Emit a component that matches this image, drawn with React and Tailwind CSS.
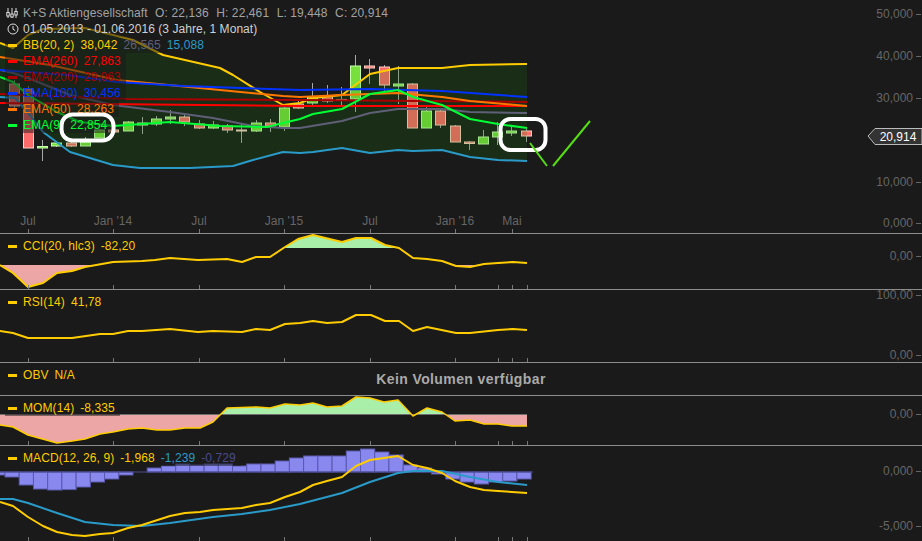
const YEL = "#ffcc00", BLU = "#2a9ac8", GRY = "#5f5f78";

const pts = (a) => a.map((p) => p.join(",")).join(" ");

// k, bodyTop, bodyBottom, wickTop, wickBottom, up
const candles = [
  [-1, 84, 106, 80, 110, 0], [0, 89, 148, 86, 148, 0], [1, 146.5, 148, 140, 161, 1], [2, 143, 146, 141, 147, 1],
  [3, 143, 146, 141, 147, 0], [4, 142, 146, 137, 146, 1], [5, 130, 138, 129, 138, 1], [6, 130, 132, 128, 136, 0],
  [7, 122, 131, 121, 131, 1], [8, 123, 125, 117, 134, 1], [9, 119, 124, 116, 126, 1], [10, 117, 119, 110, 124, 1],
  [11, 117, 122, 115, 126, 0], [12, 124, 128, 120, 129, 0], [13, 125, 128, 121, 129, 1], [14, 126, 130, 124, 133, 0],
  [15, 130, 131, 124, 143, 0], [16, 123, 131, 120, 132, 1], [17, 123, 126, 119, 132, 0], [18, 108, 127, 107, 131, 1],
  [19, 104, 108, 101, 109, 0], [20, 97, 103, 83, 106, 1], [21, 96, 101, 85, 103, 0], [22, 99.5, 100.5, 87, 105, 0],
  [23, 66, 99, 55, 112, 1], [24, 66, 68, 59, 84, 0], [25, 67, 85, 65, 92, 0], [26, 84, 86, 66, 104, 1],
  [27, 84, 128, 83, 128, 0], [28, 111, 128, 106, 128, 1], [29, 111, 125, 108, 128, 0], [30, 126, 142, 125, 142, 0],
  [31, 142, 143.5, 141, 150, 0], [32, 137, 144, 130, 144, 1], [33, 132, 137, 122, 145, 1], [34, 131, 133, 126, 136, 1],
  [35, 131, 136, 129, 142, 0],
];

const bbUp = [[0,43],[13,48],[28,35],[43,29],[85,28],[133,40],[163,55],[220,68],[233,75],[260,92],[283,105],[300,103],[313,98],[342,95],[370,74],[398,68],[442,68],[470,65],[527,64]];
const bbLow = [[0,97],[15,98],[28,113],[43,132],[70,152],[113,165],[140,168],[190,168],[233,166],[253,160],[283,152],[300,153],[313,152],[342,148],[370,153],[398,150],[413,151],[442,150],[470,157],[498,160],[527,161]];
const bbMid = [[0,70],[13,73],[28,78],[70,95],[113,105],[170,112],[213,118],[253,126],[283,128],[300,128],[342,121],[370,113],[398,109],[442,109],[470,112],[527,113]];
const e260 = [[0,103],[300,106],[527,106]];
const e200 = [[0,94],[127,99],[300,100],[527,102]];
const e100 = [[0,70],[67,75],[117,82],[183,86],[300,90],[370,89],[442,91],[527,97]];
const e50 = [[0,57],[50,65],[117,80],[220,90],[283,96],[300,97],[342,95],[398,93],[442,97],[470,101],[527,106]];
const e9 = [[0,77],[13,82],[28,95],[57,112],[80,122],[113,126],[170,122],[220,126],[267,127],[283,123],[300,119],[313,114],[342,109],[370,94],[398,90],[413,97],[442,105],[470,119],[498,124],[527,128]];

const cci = [[0,265],[13,273],[28,287],[43,283],[57,273],[72,271],[85,267],[113,262],[142,261],[155,260],[170,258],[198,260],[227,259],[242,262],[256,257],[270,257],[285,247],[298,239],[313,235],[342,242],[356,238],[371,238],[385,245],[399,248],[413,258],[427,259],[442,261],[456,266],[470,267],[484,264],[498,263],[513,262],[527,263]];
const rsi = [[0,331],[13,333],[28,338],[43,338],[72,338],[100,334],[113,334],[128,331],[142,331],[170,329],[198,332],[213,331],[242,332],[256,329],[270,330],[285,324],[300,323],[313,321],[327,323],[342,322],[356,315],[371,315],[385,321],[399,321],[413,331],[427,327],[456,333],[470,333],[498,330],[513,329],[527,330]];
const mom = [[0,425],[13,427],[28,435],[57,443],[72,441],[85,439],[100,434],[113,432],[128,429],[142,428],[157,430],[170,430],[185,428],[200,428],[213,422],[227,408],[257,407],[270,408],[285,404],[300,405],[313,403],[327,407],[342,406],[356,397],[370,398],[384,402],[398,400],[413,416],[427,408],[442,412],[455,421],[470,420],[484,424],[498,424],[512,426],[527,426]];
const macd = [[0,502],[13,506],[28,517],[43,526],[57,532],[72,535],[85,536],[100,534],[113,533],[128,528],[142,525],[170,516],[185,513],[200,512],[213,510],[242,508],[256,505],[270,503],[285,497],[300,492],[313,485],[327,481],[342,477],[356,466],[370,460],[384,458],[398,456],[413,465],[427,468],[442,473],[455,481],[470,487],[484,490],[498,491],[512,492],[527,493]];
const signal = [[0,499],[13,499],[28,503],[57,513],[85,522],[113,525],[142,526],[170,523],[213,517],[242,514],[270,510],[300,504],[342,493],[370,482],[398,473],[413,471],[442,471],[470,477],[498,482],[527,485]];
const hist = [477,485,489,490,489.6,487,482,479,475,472,468,466,464,465,464,464,466,464,464,461,458,456,456,456,451,449,452,455,465,468,474,479,482,484,482,481,479];

const allTicks = [28, 113, 199, 284, 370, 455, 498, 512, 527];

function Line({ d, c, w = 2 }) {
  return <polyline points={pts(d)} fill="none" stroke={c} strokeWidth={w} strokeLinejoin="round" />;
}

function Axis({ labels, bottom, ticks = allTicks }) {
  return (
    <g>
      {ticks.map((x) => (
        <line key={x} x1={x + 0.5} x2={x + 0.5} y1={bottom - 4} y2={bottom} stroke="#777" />
      ))}
      {labels.map(([t, y]) => (
        <g key={t}>
          <text x="913" y={y + 4} textAnchor="end" fontSize="12" fill="#666">{t}</text>
          <line x1="916" x2="921" y1={y + 0.5} y2={y + 0.5} stroke="#666" />
        </g>
      ))}
    </g>
  );
}

function Swatch({ c }) {
  return <span className="ml-[3px] mr-[6px] h-[3px] w-[9px] shrink-0" style={{ backgroundColor: c }} />;
}

function Row({ swatch, children }) {
  return (
    <div className="flex h-4 items-center bg-[#1a1a1a]/50 pr-[5px] tracking-[0.08px] whitespace-pre">
      <Swatch c={swatch} />
      <div className="flex gap-[6px]">{children}</div>
    </div>
  );
}

function Legend({ children }) {
  return <div className="absolute left-[5px] top-[4px] flex flex-col items-start text-xs leading-4">{children}</div>;
}

function Panel({ height, top, children, overlay, bordered = true }) {
  return (
    <div
      className={`relative w-full shrink-0 ${bordered ? "border-b border-[#8c8c8c]" : ""}`}
      style={{ height }}
    >
      <svg
        className="block h-full w-full overflow-visible font-['Liberation_Sans',Arial,sans-serif]"
        viewBox={`0 ${top} 922 ${height - (bordered ? 1 : 0)}`}
        preserveAspectRatio="none"
      >
        {children}
      </svg>
      {overlay}
    </div>
  );
}

function PriceChart() {
  return (
    <>
      {candles.map(([k, t, b, wt, wb, up]) => {
        const x = Math.round(28 + 14.22 * k);
        return (
          <g key={k}>
            <line x1={x + 0.5} x2={x + 0.5} y1={wt} y2={wb} stroke="#a8a8a8" />
            <rect
              x={x - 4.5}
              y={t}
              width="10"
              height={b - t}
              fill={up ? "#78e03c" : "#ff6a6a"}
              stroke={up ? "#c8ffb0" : "#ffd2c4"}
            />
          </g>
        );
      })}
      <polygon points={pts([...bbUp, ...[...bbLow].reverse()])} fill="#1f7f10" fillOpacity="0.2" />
      <Line d={bbMid} c={GRY} />
      <Line d={bbLow} c={BLU} />
      <Line d={bbUp} c={YEL} />
      <Line d={e260} c="#ff0000" />
      <Line d={e200} c="#aa0000" />
      <Line d={e50} c="#ff7700" />
      <Line d={e100} c="#0033ff" />
      <Line d={e9} c="#00ff33" />
      {[["Jul", 28], ["Jan '14", 113], ["Jul", 199], ["Jan '15", 284], ["Jul", 370], ["Jan '16", 455], ["Mai", 512]].map(([t, x], i) => (
        <text key={i} x={x} y="225" textAnchor="middle" fontSize="12" fill="#666">{t}</text>
      ))}
      <Axis
        bottom={233}
        ticks={[28, 113, 199, 284, 370, 455, 512]}
        labels={[["50,000", 14], ["40,000", 56], ["30,000", 98], ["10,000", 182], ["0,000", 223]]}
      />
      <polygon points="868,136 875,128.5 922,128.5 922,144.5 875,144.5" fill="#333" stroke="#bbb" />
      <text x="898" y="141" textAnchor="middle" fontSize="12" fill="#fff">20,914</text>
    </>
  );
}

function PriceLegend() {
  return (
    <div className="absolute left-[5px] top-[5px] flex flex-col items-start text-xs leading-4">
      <div className="flex h-4 items-center gap-[7.5px] bg-[#1a1a1a]/60 pr-[5px] tracking-[0.1px] text-[#a3a3a3] whitespace-pre">
        <div className="flex items-center">
          <svg width="12" height="12" viewBox="0 0 12 12" className="ml-[1px] mr-[5px]" fill="#1a1a1a" stroke="#ddd">
            <path d="M2 1v10M6 1v10M10 1v10" strokeWidth="1" />
            <rect x="0.8" y="5.5" width="2.4" height="3.5" />
            <rect x="4.8" y="7" width="2.4" height="3" />
            <rect x="8.8" y="4.5" width="2.4" height="3.5" />
          </svg>
          <span>K+S Aktiengesellschaft</span>
        </div>
        <span>O: 22,136</span>
        <span>H: 22,461</span>
        <span>L: 19,448</span>
        <span>C: 20,914</span>
      </div>
      <div className="flex h-4 items-center bg-[#1a1a1a]/60 pr-[5px] tracking-[0.05px] text-[#d0d0d0] whitespace-pre">
        <svg width="12" height="12" viewBox="0 0 12 12" className="ml-[2px] mr-[4px]" fill="none" stroke="#ddd">
          <circle cx="6" cy="6" r="5" />
          <path d="M6 3v3.2l2.2 1.3" />
        </svg>
        <span>01.05.2013 - 01.06.2016 (3 Jahre, 1 Monat)</span>
      </div>
      <Row swatch={YEL}>
        <span className="text-[#ffcc00]">BB(20, 2)</span>
        <span className="text-[#ffcc00]">38,042</span>
        <span className="text-[#5f5f78]">26,565</span>
        <span className="text-[#2a9ac8]">15,088</span>
      </Row>
      <Row swatch="#ff0000"><span className="text-[#ff0000]">EMA(260)</span><span className="text-[#ff0000]">27,863</span></Row>
      <Row swatch="#aa0000"><span className="text-[#aa0000]">EMA(200)</span><span className="text-[#aa0000]">29,063</span></Row>
      <Row swatch="#0033ff"><span className="text-[#0033ff]">EMA(100)</span><span className="text-[#0033ff]">30,456</span></Row>
      <Row swatch="#ff7700"><span className="text-[#ff7700]">EMA(50)</span><span className="text-[#ff7700]">28,263</span></Row>
      <Row swatch="#00ff33"><span className="text-[#00ff33]">EMA(9)</span><span className="text-[#00ff33]">22,854</span></Row>
    </div>
  );
}

function Marks() {
  return (
    <svg className="pointer-events-none absolute inset-0 h-full w-full" viewBox="0 0 922 233" preserveAspectRatio="none" fill="none">
      <rect x="61.5" y="114.5" width="52" height="26" rx="11" stroke="#fff" strokeWidth="4" />
      <rect x="500.5" y="119" width="45" height="31" rx="10" stroke="#fff" strokeWidth="4" />
      <path d="M530 143L547 166M553 166L590 121" stroke="#55dd11" strokeWidth="2" />
    </svg>
  );
}

const PINK = "#eda6a6", MINT = "#a9eea9";

function Filled({ line, id, below, above, y0, y1 }) {
  const start = line[0][0], end = line[line.length - 1][0];
  return (
    <g>
      <defs>
        <clipPath id={`${id}a`}><rect x="0" y={y0} width="922" height={above - y0} /></clipPath>
        <clipPath id={`${id}b`}><rect x="0" y={below} width="922" height={y1 - below} /></clipPath>
      </defs>
      <polygon clipPath={`url(#${id}a)`} fill={MINT} points={pts([[start, above], ...line, [end, above]])} />
      <polygon clipPath={`url(#${id}b)`} fill={PINK} points={pts([[start, below], ...line, [end, below]])} />
    </g>
  );
}

function Val({ children, c = "text-[#ffcc00]" }) {
  return <span className={c}>{children}</span>;
}

export default function App() {
  return (
    <div className="flex h-[541px] w-[922px] flex-col overflow-hidden bg-[#1a1a1a] font-['Liberation_Sans',Arial,sans-serif]">
      <Panel height={234} top={0} overlay={<><PriceLegend /><Marks /></>}>
        <PriceChart />
      </Panel>

      <Panel
        height={56}
        top={234}
        overlay={<Legend><Row swatch={YEL}><Val>CCI(20, hlc3)</Val><Val>-82,20</Val></Row></Legend>}
      >
        <Filled line={cci} id="cci" above={248} below={265} y0={234} y1={289} />
        <Line d={cci} c={YEL} />
        <Axis bottom={289} labels={[["0,00", 256]]} />
      </Panel>

      <Panel
        height={73}
        top={290}
        overlay={<Legend><Row swatch={YEL}><Val>RSI(14)</Val><Val>41,78</Val></Row></Legend>}
      >
        <Line d={rsi} c={YEL} />
        <Axis bottom={362} labels={[["100,00", 295], ["0,00", 355]]} />
      </Panel>

      <div className="relative flex h-[33px] w-full shrink-0 items-center justify-center border-b border-[#8c8c8c]">
        <Legend><Row swatch={YEL}><Val>OBV</Val><Val>N/A</Val></Row></Legend>
        <span className="text-sm font-bold tracking-[0.4px] text-[#aaaaaa]">Kein Volumen verfügbar</span>
      </div>

      <Panel
        height={50}
        top={396}
        overlay={<Legend><Row swatch={YEL}><Val>MOM(14)</Val><Val>-8,335</Val></Row></Legend>}
      >
        <Filled line={mom} id="mom" above={414} below={414} y0={396} y1={445} />
        <line x1="0" x2="527" y1="414.5" y2="414.5" stroke="#6e6e6e" />
        <Line d={mom} c={YEL} w={1.5} />
        <Axis bottom={445} labels={[["0,00", 414]]} />
      </Panel>

      <Panel
        height={95}
        top={446}
        bordered={false}
        overlay={
          <Legend>
            <Row swatch={YEL}>
              <Val>MACD(12, 26, 9)</Val>
              <Val>-1,968</Val>
              <Val c="text-[#2a9ac8]">-1,239</Val>
              <Val c="text-[#4a4a90]">-0,729</Val>
            </Row>
          </Legend>
        }
      >
        <rect x="-5" y="472" width="10" height="3" fill="#8888ee" stroke="#5a5ab0" />
        {hist.map((y, i) => {
          const x = 5 + 14.22 * i;
          return (
            <rect
              key={i}
              x={x}
              y={Math.min(y, 472)}
              width="14.22"
              height={Math.abs(y - 472)}
              fill="#8888ee"
              stroke="#5a5ab0"
            />
          );
        })}
        <line x1="0" x2="533" y1="472" y2="472" stroke="#4a4a90" />
        <Line d={signal} c={BLU} />
        <Line d={macd} c={YEL} />
        <Axis bottom={541} labels={[["0,000", 471], ["-5,000", 526]]} />
      </Panel>
    </div>
  );
}
